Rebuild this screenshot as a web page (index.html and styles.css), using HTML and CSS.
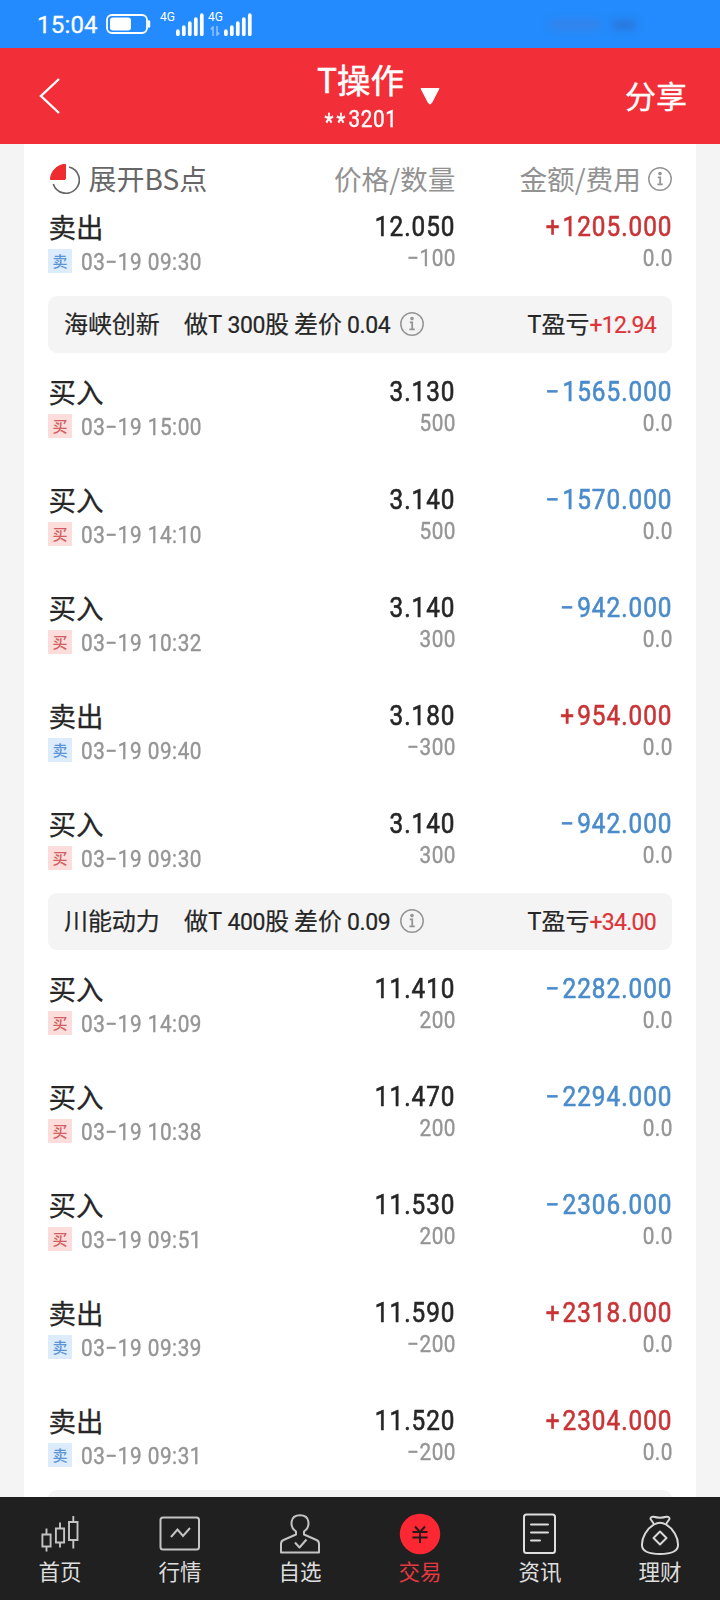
FILE: index.html
```html
<!DOCTYPE html>
<html lang="zh-CN">
<head>
<meta charset="utf-8">
<title>T操作</title>
<link rel="stylesheet" href="styles.css">
</head>
<body>
<svg class="defs" width="0" height="0">
  <symbol id="info" viewBox="0 0 24 24"><circle cx="12" cy="12" r="11.2" fill="none" stroke="currentColor" stroke-width="1.5"/><circle cx="12" cy="6.6" r="1.8" fill="currentColor"/><path d="M9.8 10.4h2.4v7M9.4 17.4h5.4" fill="none" stroke="currentColor" stroke-width="1.8"/></symbol>
  <symbol id="bars" viewBox="0 0 28 24"><path d="M1.9 21.200v-3M7.800 21.200v-7M13.800 21.200v-11M19.800 21.200v-15M25.800 21.200v-19" fill="none" stroke="#fff" stroke-width="3.700" stroke-linecap="round"/></symbol>
</svg>
<div class="screen">
  <div class="status">
    <span class="clock">15:04</span>
    <svg class="battery" width="45" height="20" viewBox="0 0 45 20"><rect x="1" y="1" width="40" height="18" rx="5" fill="none" stroke="#fff" stroke-width="1.8"/><rect x="4" y="3.5" width="21" height="13" rx="3" fill="#fff"/><path d="M43 7.500v5" stroke="#fff" stroke-width="2.4" stroke-linecap="round"/></svg>
    <span class="net">4G</span>
    <svg class="signal" width="28" height="24"><use href="#bars"/></svg>
    <span class="net second">4G<svg class="updown" width="10" height="10" viewBox="0 0 10 10"><path d="M3 10V1L0.8 3.4M7 0v9L9.2 6.6" fill="none" stroke="#8fc0ff" stroke-width="1.6"/></svg></span>
    <svg class="signal" width="28" height="24"><use href="#bars"/></svg>
    <span class="smudge"><i></i><i></i></span>
  </div>
  <header class="top">
    <svg class="back" width="22" height="38" viewBox="0 0 22 38"><path d="M20 2L2 19L20 36" fill="none" stroke="#fff" stroke-width="2.4"/></svg>
    <div class="heading">
      <div class="title">T操作</div>
      <div class="account"><span class="stars">**</span>3201</div>
    </div>
    <svg class="caret" width="20" height="17" viewBox="0 0 20 17"><path d="M1 0.5h18L11.5 15q-1.5 2-3 0z" fill="#fff" stroke="#fff" stroke-linejoin="round"/></svg>
    <div class="share">分享</div>
  </header>
  <main class="panel" id="panel">
    <div class="columns">
      <div class="expand">
        <svg class="pie" width="30" height="30" viewBox="0 0 30 30"><path d="M15.5 15V.3C8 .3.500 7 .500 15.500H15z" fill="#ee2b2f" stroke="#ee2b2f" stroke-linejoin="round"/><path d="M19 3A13.3 13.3 0 1 1 3.3 20" fill="none" stroke="#666" stroke-width="1.7"/></svg>
        <span>展开BS点</span>
      </div>
      <div class="right">价格/数量</div>
      <div class="right fee">金额/费用<svg class="info" width="24" height="24"><use href="#info"/></svg></div>
    </div>
  </main>
  <nav class="tabs">
    <a class="tab"><svg width="42" height="42" viewBox="0 0 42 42"><g fill="none" stroke="#c4c4c4" stroke-width="1.9"><path d="M3.4 21.5h8.2v12H3.4zM16.900 15.500h8.200v14H16.900zM30 9h8.500v18H30zM7.500 15.500v6M7.500 33.500v5M21 9.500v6M21 29.500v5M34.300 3v6M34.300 27v8.500"/></g></svg><span>首页</span></a>
    <a class="tab"><svg width="42" height="42" viewBox="0 0 42 42"><g fill="none" stroke="#c4c4c4" stroke-width="2"><rect x="1.500" y="4.500" width="38.500" height="32" rx="2.500"/><path d="M12 24l6.500-7.500 5.500 6.500 7-8"/></g></svg><span>行情</span></a>
    <a class="tab"><svg width="42" height="42" viewBox="0 0 42 42"><g fill="none" stroke="#c4c4c4" stroke-width="2" stroke-linejoin="round"><path d="M17 18.500C10.500 14 10.500 2.300 21 2.300S31.500 14 25 18.500V21.500L37.500 27Q40 28 40 31V39.500H2V31Q2 28 4.500 27L17 21.500Z"/><path d="M16 29.500l4.500 5 7-8"/></g></svg><span>自选</span></a>
    <a class="tab active"><svg width="42" height="42" viewBox="0 0 42 42"><circle cx="21" cy="21" r="20.200" fill="#fb2833"/><path d="M16 13.500l5 5.500 5-5.500M13.500 19h15M13.500 24.500h15M21 19v11" fill="none" stroke="#2b171a" stroke-width="2"/></svg><span>交易</span></a>
    <a class="tab"><svg width="42" height="42" viewBox="0 0 42 42"><g fill="none" stroke="#dedede" stroke-width="2" stroke-linecap="round"><rect x="5" y="1.500" width="31" height="38.500" rx="2.500"/><path d="M12 11.500h17M12 19.500h17M12 27.500h9"/></g></svg><span>资讯</span></a>
    <a class="tab"><svg width="42" height="42" viewBox="0 0 42 42"><g fill="none" stroke="#d8d8d8" stroke-width="2" stroke-linejoin="round"><path d="M15 11L11.500 6Q11.500 3.500 14.500 3.800Q21 5.500 27.500 3.800Q30.500 3.500 30.500 6L27 11"/><path d="M15 11.500Q21 8 27 11.500C34 15.500 39.500 24.500 39 32.500Q38.500 41 21 41T3 32.500C2.500 24.500 8 15.500 15 11.500Z"/><path d="M21 18.500l6.500 6.500-6.500 6.500-6.500-6.500z"/></g></svg><span>理财</span></a>
  </nav>
</div>
<script src="app.js"></script>
</body>
</html>
```
FILE: styles.css
```css
* { box-sizing: border-box; }
body { margin: 0; font-family: Roboto, "Noto Sans CJK SC", sans-serif; color: #262626; }
.defs { position: absolute; }
.screen { width: 720px; height: 1600px; display: flex; flex-direction: column; background: #f4f4f4; overflow: hidden; }

.status { height: 48px; flex: none; background: #238bfd; color: #fff; display: flex; align-items: flex-start; padding: 0 0 0 37px; }
.clock { font-size: 24px; line-height: 28px; margin-top: 11px; width: 68.5px; letter-spacing: 0.2px; -webkit-text-stroke: 0.3px #fff; }
.battery { margin-top: 14px; }
.net { font-size: 12px; line-height: 14px; margin: 10px 0 0 9.500px; width: 16px; white-space: nowrap; }
.net.second { margin-left: 4px; display: flex; flex-direction: column; width: 16px; }
.updown { margin: 2px 0 0 2px; }
.signal { margin-top: 13px; flex: none; }
.smudge { display: flex; gap: 12px; margin: 20px 0 0 298px; filter: blur(4px); opacity: 0.45; }
.smudge i { width: 50px; height: 10px; background: #4c79d0; }
.smudge i + i { width: 24px; background: #3060b0; }

.top { height: 96px; flex: none; background: #f22f38; color: #fff; display: flex; align-items: center; padding: 0 33px 0 39px; }
.back { width: 22px; }
.heading { width: 90px; margin-left: 254.500px; text-align: center; height: 96px; }
.title { font: 33.500px/40px "Noto Sans CJK SC", sans-serif; margin-top: 11px; white-space: nowrap; -webkit-text-stroke: 0.5px #fff; }
.account { font-size: 23.500px; line-height: 28px; margin-top: 6px; letter-spacing: 0.7px; transform: scaleX(0.88); white-space: nowrap; -webkit-text-stroke: 0.4px #fff; }
.stars { letter-spacing: 3.500px; position: relative; top: 3px; }
.caret { margin-left: 14.500px; }
.share { margin: -2px 0 0 auto; font: 31px/40px "Noto Sans CJK SC", sans-serif; -webkit-text-stroke: 0.3px #fff; }

.panel { width: 672px; margin: 0 24px; padding: 0 24px; flex: 1; min-height: 0; overflow: hidden; background: #fff; }
.columns, .row { display: grid; grid-template-columns: 250px 157.500px 216.500px; }
.columns { height: 44px; padding-top: 14px; font: 27.700px/40px "Noto Sans CJK SC", sans-serif; color: #929292; white-space: nowrap; }
.expand { display: flex; color: #666; gap: 9px; font-size: 28px; }
.pie { margin: 6px 0 0 1.500px; }
.right { text-align: right; }
.fee { display: flex; justify-content: flex-end; gap: 7px; }
.columns .info { margin-top: 9px; }

.row { height: 108px; }
.name { font: 27.500px/36px "Noto Sans CJK SC", sans-serif; margin: 19.500px 0 0 0.500px; -webkit-text-stroke: 0.3px currentColor; }
.time { display: flex; align-items: center; gap: 8.500px; margin-top: 5.500px; height: 24px; }
.tag { width: 24px; height: 24px; font: 500 15px/23px "Noto Sans CJK SC", sans-serif; text-align: center; }
.tag.buy { background: #fddddc; color: #d0605f; }
.tag.sell { background: #dcecfd; color: #5b94d6; }

/* Tall, narrow figures with open spacing */
.date, .sub, .value { -webkit-text-stroke: 0.4px currentColor; transform: scaleX(0.9); transform-origin: right; }
.date, .sub { font-size: 23px; line-height: 26px; color: #959595; letter-spacing: 0.6px; }
.date { transform-origin: left; margin-top: 4px; white-space: nowrap; }
.value { font-size: 27px; line-height: 32px; margin: 22.500px 0 0 0; letter-spacing: 1.100px; -webkit-text-stroke-width: 0.6px; }
.value.up::first-letter, .value.down::first-letter { letter-spacing: 3.500px; }
.sub { margin: 3px -0.500px 0 0; }
.up { color: #c93437; }
.down { color: #4a8bcb; }

.group { height: 57px; border-radius: 9px; background: #f4f4f4; display: flex; align-items: center; padding: 0 16px 3px; font-size: 23px; white-space: pre; letter-spacing: -0.45px; -webkit-text-stroke: 0.2px currentColor; }
.group b { font: 24px/34px "Noto Sans CJK SC", sans-serif; letter-spacing: -0.1px; }
.stock { width: 120px; }
.group .info { margin: 2px 0 0 9.500px; }
.info { color: #959595; flex: none; }
.profit { margin-left: auto; }
.profit em { font-style: normal; color: #dc3439; letter-spacing: -0.7px; }

.tabs { height: 103px; flex: none; background: #202020; display: grid; grid-template-columns: repeat(6, 120px); }
.tab { display: flex; flex-direction: column; align-items: center; padding-top: 16px; font: 21.500px/30px "Noto Sans CJK SC", sans-serif; color: #dedede; }
.tab span { margin-top: 1px; }
.active { color: #e53840; }
```
FILE: app.js
```js
// Trades: [time, price, quantity, amount]; a negative quantity is a sale.
const opening = [['09:30', '12.050', '−100', '+1205.000']];
const groups = [
  { stock: '海峡创新', shares: '300', gap: '0.04', profit: '+12.94', trades: [
    ['15:00', '3.130', '500', '−1565.000'],
    ['14:10', '3.140', '500', '−1570.000'],
    ['10:32', '3.140', '300', '−942.000'],
    ['09:40', '3.180', '−300', '+954.000'],
    ['09:30', '3.140', '300', '−942.000']] },
  { stock: '川能动力', shares: '400', gap: '0.09', profit: '+34.00', trades: [
    ['14:09', '11.410', '200', '−2282.000'],
    ['10:38', '11.470', '200', '−2294.000'],
    ['09:51', '11.530', '200', '−2306.000'],
    ['09:39', '11.590', '−200', '+2318.000'],
    ['09:31', '11.520', '−200', '+2304.000']] }
];

function row([time, price, quantity, amount]) {
  const sale = amount.startsWith('+');
  return `<div class="row">
    <div><div class="name">${sale ? '卖出' : '买入'}</div>
      <div class="time"><span class="tag ${sale ? 'sell' : 'buy'}">${sale ? '卖' : '买'}</span><span class="date">03−19 ${time}</span></div></div>
    <div class="right"><div class="value">${price}</div><div class="sub">${quantity}</div></div>
    <div class="right"><div class="value ${sale ? 'up' : 'down'}">${amount}</div><div class="sub">0.0</div></div>
  </div>`;
}

function group(g) {
  return `<div class="group"><b class="stock">${g.stock}</b><span><b>做T</b> ${g.shares}<b>股</b> <b>差价</b> ${g.gap}</span><svg class="info" width="24" height="24"><use href="#info"/></svg><span class="profit"><b>T盈亏</b><em>${g.profit}</em></span></div>`
    + g.trades.map(row).join('');
}

document.getElementById('panel').insertAdjacentHTML('beforeend',
  opening.map(row).join('') + groups.map(group).join('') + '<div class="group"></div>');
```
